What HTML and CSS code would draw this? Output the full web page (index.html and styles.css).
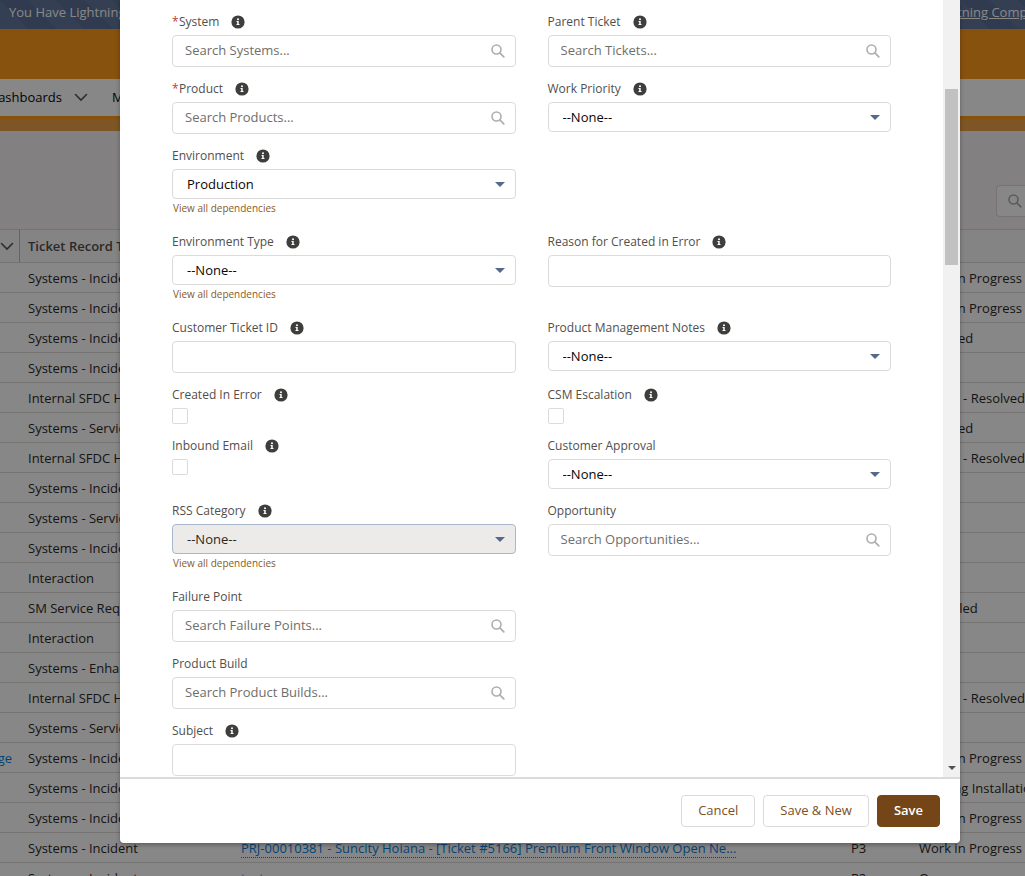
FILE: index.html
```html
<!DOCTYPE html>
<html lang="en">
<head>
<meta charset="UTF-8">
<meta name="viewport" content="width=device-width, initial-scale=1.0">
<title>New Ticket</title>

<link rel="stylesheet" href="styles.css">
</head>

<body>

<!-- icons shared by the page -->
<svg class="sprite" width="0" height="0" aria-hidden="true">
    <symbol id="info" viewBox="0 0 14 14">
        <circle cx="7" cy="7" r="6.6" fill="#3e3e3c"/>
        <circle cx="7" cy="4.2" r="1" fill="#fff"/>
        <path d="M5.500 6h2.200v3h.8v1.100H5.500V9h.7V7.100h-.7z" fill="#fff"/>
    </symbol>
    <symbol id="search" viewBox="0 0 14 14">
        <circle cx="5.500" cy="5.500" r="4.500" fill="none" stroke="currentColor" stroke-width="1.600"/>
        <path d="M8.800 8.800l4 4" stroke="currentColor" stroke-width="1.700" stroke-linecap="round"/>
    </symbol>
    <symbol id="chevron" viewBox="0 0 14 14">
        <path d="M1.500 4.500L7 10l5.500-5.500" fill="none" stroke="currentColor" stroke-width="1.600" stroke-linecap="round"/>
    </symbol>
</svg>

<div class="page">
    <div class="banner">
        <span>You Have Lightning</span>
        <a href="#">Lightning Components</a>
    </div>
    <div class="brand-bar"></div>
    <nav class="nav">
        <a href="#" class="nav-first">Dashboards</a>
        <svg class="chevron"><use href="#chevron"/></svg>
        <a href="#" class="nav-next">More</a>
    </nav>
    <div class="brand-strip"></div>

    <div class="list-header">
        <div class="list-search"><svg class="search-icon"><use href="#search"/></svg></div>
    </div>

    <table class="tickets">
        <colgroup>
            <col class="col-account"><col class="col-type"><col class="col-subject"><col class="col-priority"><col>
        </colgroup>
        <thead>
            <tr><th><svg class="chevron"><use href="#chevron"/></svg></th><th>Ticket Record Type</th><th></th><th></th><th></th></tr>
        </thead>
        <tbody>
            <tr><td></td><td>Systems - Incident</td><td></td><td></td><td>Work in Progress</td></tr>
            <tr><td></td><td>Systems - Incident</td><td></td><td></td><td>Work in Progress</td></tr>
            <tr><td></td><td>Systems - Incident</td><td></td><td></td><td>Assigned</td></tr>
            <tr><td></td><td>Systems - Incident</td><td></td><td></td><td></td></tr>
            <tr><td></td><td>Internal SFDC Help</td><td></td><td></td><td>Closed - Resolved</td></tr>
            <tr><td></td><td>Systems - Service</td><td></td><td></td><td>Assigned</td></tr>
            <tr><td></td><td>Internal SFDC Help</td><td></td><td></td><td>Closed - Resolved</td></tr>
            <tr><td></td><td>Systems - Incident</td><td></td><td></td><td></td></tr>
            <tr><td></td><td>Systems - Service</td><td></td><td></td><td></td></tr>
            <tr><td></td><td>Systems - Incident</td><td></td><td></td><td></td></tr>
            <tr><td></td><td>Interaction</td><td></td><td></td><td></td></tr>
            <tr><td></td><td>SM Service Request</td><td></td><td></td><td>Cancelled</td></tr>
            <tr><td></td><td>Interaction</td><td></td><td></td><td></td></tr>
            <tr><td></td><td>Systems - Enhancement</td><td></td><td></td><td></td></tr>
            <tr><td></td><td>Internal SFDC Help</td><td></td><td></td><td>Closed - Resolved</td></tr>
            <tr><td></td><td>Systems - Service</td><td></td><td></td><td></td></tr>
            <tr><td><a href="#">ge</a></td><td>Systems - Incident</td><td></td><td></td><td>Work in Progress</td></tr>
            <tr><td></td><td>Systems - Incident</td><td></td><td></td><td>Pending Installation</td></tr>
            <tr><td></td><td>Systems - Incident</td><td></td><td></td><td>Work in Progress</td></tr>
            <tr><td></td><td>Systems - Incident</td><td><a href="#" class="hovered">PRJ-00010381 - Suncity Hoiana - [Ticket #5166] Premium Front Window Open Ne...</a></td><td>P3</td><td>Work in Progress</td></tr>
            <tr><td></td><td>Systems - Incident</td><td><a href="#">test</a></td><td>P2</td><td>Open</td></tr>
        </tbody>
    </table>
</div>

<div class="backdrop"></div>

<form class="modal" role="dialog" aria-label="New Ticket">
    <div class="modal-body">
        <div class="fields">

            <div class="field">
                <div class="label"><span class="required">*</span><label for="system">System</label><svg class="info"><use href="#info"/></svg></div>
                <div class="lookup"><input type="text" id="system" placeholder="Search Systems..."><svg class="search-icon"><use href="#search"/></svg></div>
            </div>
            <div class="field">
                <div class="label"><label for="parent">Parent Ticket</label><svg class="info"><use href="#info"/></svg></div>
                <div class="lookup"><input type="text" id="parent" placeholder="Search Tickets..."><svg class="search-icon"><use href="#search"/></svg></div>
            </div>

            <div class="field">
                <div class="label"><span class="required">*</span><label for="product">Product</label><svg class="info"><use href="#info"/></svg></div>
                <div class="lookup"><input type="text" id="product" placeholder="Search Products..."><svg class="search-icon"><use href="#search"/></svg></div>
            </div>
            <div class="field">
                <div class="label"><label for="priority">Work Priority</label><svg class="info"><use href="#info"/></svg></div>
                <div class="picklist"><select id="priority"><option>--None--</option></select></div>
            </div>

            <div class="field">
                <div class="label"><label for="environment">Environment</label><svg class="info"><use href="#info"/></svg></div>
                <div class="picklist"><select id="environment"><option>Production</option></select></div>
                <a href="#" class="dependencies">View all dependencies</a>
            </div>
            <div class="field"></div>

            <div class="field">
                <div class="label"><label for="envtype">Environment Type</label><svg class="info"><use href="#info"/></svg></div>
                <div class="picklist"><select id="envtype"><option>--None--</option></select></div>
                <a href="#" class="dependencies">View all dependencies</a>
            </div>
            <div class="field">
                <div class="label"><label for="reason">Reason for Created in Error</label><svg class="info"><use href="#info"/></svg></div>
                <input type="text" id="reason">
            </div>

            <div class="field">
                <div class="label"><label for="customerid">Customer Ticket ID</label><svg class="info"><use href="#info"/></svg></div>
                <input type="text" id="customerid">
            </div>
            <div class="field">
                <div class="label"><label for="notes">Product Management Notes</label><svg class="info"><use href="#info"/></svg></div>
                <div class="picklist"><select id="notes"><option>--None--</option></select></div>
            </div>

            <div class="field">
                <div class="label"><label for="createderror">Created In Error</label><svg class="info"><use href="#info"/></svg></div>
                <input type="checkbox" id="createderror">
            </div>
            <div class="field">
                <div class="label"><label for="escalation">CSM Escalation</label><svg class="info"><use href="#info"/></svg></div>
                <input type="checkbox" id="escalation">
            </div>

            <div class="field">
                <div class="label"><label for="inbound">Inbound Email</label><svg class="info"><use href="#info"/></svg></div>
                <input type="checkbox" id="inbound">
            </div>
            <div class="field">
                <div class="label"><label for="approval">Customer Approval</label></div>
                <div class="picklist"><select id="approval"><option>--None--</option></select></div>
            </div>

            <div class="field">
                <div class="label"><label for="rss">RSS Category</label><svg class="info"><use href="#info"/></svg></div>
                <div class="picklist"><select id="rss" disabled><option>--None--</option></select></div>
                <a href="#" class="dependencies">View all dependencies</a>
            </div>
            <div class="field">
                <div class="label"><label for="opportunity">Opportunity</label></div>
                <div class="lookup"><input type="text" id="opportunity" placeholder="Search Opportunities..."><svg class="search-icon"><use href="#search"/></svg></div>
            </div>

            <div class="field">
                <div class="label"><label for="failure">Failure Point</label></div>
                <div class="lookup"><input type="text" id="failure" placeholder="Search Failure Points..."><svg class="search-icon"><use href="#search"/></svg></div>
            </div>
            <div class="field"></div>

            <div class="field">
                <div class="label"><label for="build">Product Build</label></div>
                <div class="lookup"><input type="text" id="build" placeholder="Search Product Builds..."><svg class="search-icon"><use href="#search"/></svg></div>
            </div>
            <div class="field"></div>

            <div class="field">
                <div class="label"><label for="subject">Subject</label><svg class="info"><use href="#info"/></svg></div>
                <input type="text" id="subject">
            </div>

        </div>

        <div class="scrollbar">
            <div class="thumb"></div>
            <div class="arrow-down"></div>
        </div>
    </div>

    <div class="modal-footer">
        <button type="button">Cancel</button>
        <button type="button">Save &amp; New</button>
        <button type="submit" class="primary">Save</button>
    </div>
</form>

</body>
</html>
```
FILE: styles.css
```css
* {
    box-sizing: border-box;
}

body {
    margin: 0;
    height: 100vh;
    overflow: hidden;
    position: relative;
    font-family: "Open Sans", "Noto Sans", sans-serif;
    font-size: 13px;
    line-height: 18px;
    color: #2b2826;
    background: white;
}

a {
    color: #0b7fe0;
    text-decoration: none;
}

.sprite {
    position: absolute;
}

/* page behind the modal */
.page {
    height: 100%;
    overflow: hidden;
}

.banner {
    height: 29px;
    display: flex;
    justify-content: space-between;
    padding: 3px 0 0 9px;
    color: white;
    white-space: nowrap;
    background: repeating-linear-gradient(45deg, #62779f 0 20px, #5c7098 20px 40px);
}

.banner a {
    width: 93px;
    overflow: hidden;
    color: white;
    text-decoration: underline;
}

.brand-bar {
    height: 50px;
    background: #ff9a1c;
}

.nav {
    height: 37px;
    display: flex;
    align-items: center;
    padding-bottom: 1px;
    background: white;
}

.nav a {
    color: #080707;
}

.nav-first {
    width: 62px;
    display: flex;
    justify-content: flex-end;
    overflow: hidden;
}

.chevron {
    width: 14px;
    height: 14px;
    color: #555;
}

.nav .chevron {
    margin: 0 24px 0 12px;
}

.brand-strip {
    height: 15px;
    border-top: 3px solid #ff9a1c;
    background: #efa347;
}

.list-header {
    height: 98px;
    display: flex;
    justify-content: flex-end;
    align-items: flex-end;
    padding-bottom: 12px;
    background: #f8f2f3;
}

.list-search {
    width: 29px;
    height: 32px;
    padding: 8px 0 0 11px;
    border: 1px solid #dddbda;
    border-right: 0;
    border-radius: 4px 0 0 4px;
    background: white;
}

.search-icon {
    display: block;
    width: 14px;
    height: 14px;
    color: #b0adab;
}

.tickets {
    width: 100%;
    table-layout: fixed;
    border-collapse: separate;
    border-spacing: 0;
}

.col-account {
    width: 20px;
}

.col-type {
    width: 213px;
}

.col-subject {
    width: 610px;
}

.col-priority {
    width: 68px;
}

.tickets th,
.tickets td {
    height: 30px;
    padding: 0 0 0 8px;
    overflow: hidden;
    text-align: left;
    white-space: nowrap;
    border-bottom: 1px solid #dddbda;
}

.tickets th {
    height: 34px;
    font-weight: 600;
    color: #514f4d;
    background: #fafaf9;
    border-top: 1px solid #dddbda;
}

.tickets th:first-child {
    padding: 0;
    border-right: 1px solid #bbb;
}

.tickets th .chevron {
    display: block;
}

.tickets td:first-child {
    padding: 0 8px 0 0;
    direction: rtl;
}

.hovered {
    border-bottom: 1px dotted #0b7fe0;
}

.backdrop {
    position: absolute;
    inset: 0;
    background: rgba(0, 0, 0, 0.47);
}

/* modal */
.modal {
    position: absolute;
    inset: 0 65px 33px 120px;
    display: flex;
    flex-direction: column;
    overflow: hidden;
    background: white;
    border-radius: 0 0 4px 4px;
    box-shadow: 0 2px 4px rgba(0, 0, 0, 0.3);
}

.modal-body {
    flex: 1;
    min-height: 0;
    display: flex;
}

.fields {
    flex: 1;
    display: grid;
    grid-template-columns: 1fr 1fr;
    align-content: start;
    gap: 13px 32px;
    padding: 13px 52px;
}

.label {
    display: flex;
    align-items: center;
    height: 18px;
    margin-bottom: 4px;
    font-size: 12px;
    color: #514f4d;
}

.required {
    width: 7px;
    color: #c23934;
}

.info {
    width: 14px;
    height: 14px;
    margin-left: 12px;
}

input[type="text"],
select {
    display: block;
    width: 100%;
    height: 32px;
    padding: 0 12px 2px;
    border: 1px solid #dddbda;
    border-radius: 4px;
    font: inherit;
    color: #080707;
    background: white;
}

input::placeholder {
    color: #706e6b;
    opacity: 1;
}

select {
    height: 30px;
    padding: 0 14px;
    appearance: none;
}

select:disabled {
    color: #2b2826;
    opacity: 1;
    background: #ecebea;
    border-color: #a8b7cc;
}

input[type="checkbox"] {
    display: block;
    width: 16px;
    height: 16px;
    margin: 0;
    appearance: none;
    border: 1px solid #dddbda;
    border-radius: 2px;
    background: white;
}

.lookup,
.picklist {
    position: relative;
}

.lookup .search-icon {
    position: absolute;
    right: 11px;
    top: 9px;
}

.picklist::after {
    content: "";
    position: absolute;
    right: 11px;
    top: 13px;
    border: 5px solid transparent;
    border-top-color: #54698d;
    border-bottom: 0;
}

.dependencies {
    display: block;
    height: 21px;
    padding-left: 1px;
    font-size: 10px;
    color: #8a5a25;
}

.scrollbar {
    width: 17px;
    display: flex;
    flex-direction: column;
    align-items: center;
    justify-content: space-between;
    padding: 89px 0 7px;
    background: #f1f1f1;
}

.thumb {
    width: 13px;
    height: 176px;
    background: #c1c1c1;
}

.arrow-down {
    border: 4px solid transparent;
    border-top-color: #505050;
    border-bottom: 0;
}

.modal-footer {
    display: flex;
    justify-content: flex-end;
    gap: 8px;
    padding: 16px 20px;
    border-top: 2px solid #dddbda;
}

button {
    height: 32px;
    padding: 0 16px 2px;
    border: 1px solid #dddbda;
    border-radius: 4px;
    font: inherit;
    color: #7d4f1e;
    background: white;
}

.primary {
    font-weight: 600;
    color: white;
    background: #744617;
    border-color: #744617;
}
```
